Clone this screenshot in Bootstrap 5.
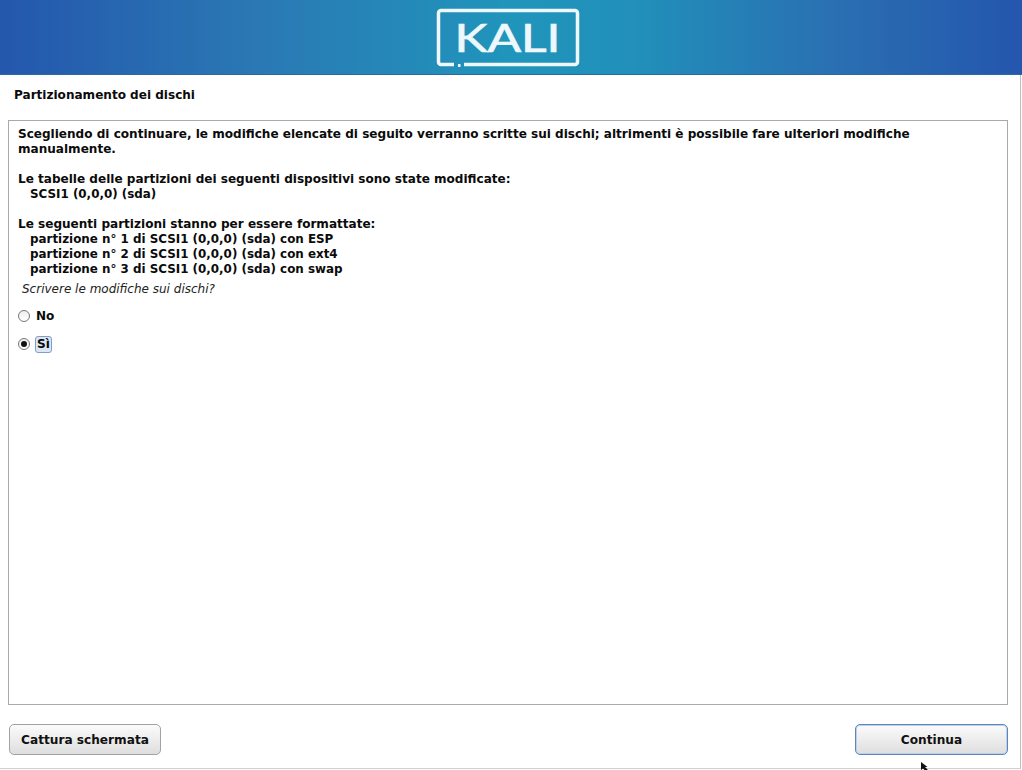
<!DOCTYPE html>
<html lang="en">
<head>
  <meta charset="UTF-8">
  <meta name="viewport" content="width=device-width, initial-scale=1">
  <title>Partizionamento dei dischi</title>
  <link href="https://cdn.jsdelivr.net/npm/bootstrap@5.3.0/dist/css/bootstrap.min.css" rel="stylesheet">
  <style>
    html, body { height: 770px; overflow: hidden; background: #fff; }
    body { font-family: "DejaVu Sans", sans-serif; font-size: 12.05px; font-weight: 700; color: #0b0b0b; line-height: 15px; }
    .kali-banner { height: 75px; background: linear-gradient(90deg, #2457ad 0%, #2a78b4 25%, #2095bb 50%, #2190ba 62%, #2a6fb2 82%, #2456ad 100%); border-bottom: 1px solid #2a6a9c; }
    .kali-logo { width: 146px; height: 74px; display: block; margin-right: 6px; }
    .kali-page { height: 695px; }
    .kali-main { width: 1021px; height: 694px; border-right: 1px solid #bdbdbd; border-bottom: 1px solid #d0d0d0; padding: 0 12px 12px 8px; }
    .kali-title { height: 45px; padding: 13px 0 0 6px; }
    .kali-box { height: 585px; border: 1px solid #a9a9a9; padding: 6px 9px; }
    .kali-box p { margin: 0 0 15px; }
    .kali-indent { padding-left: 12px; font-size: 11.9px; }
    .kali-question { font-weight: 400; font-style: italic; font-size: 12px; padding-left: 4px; margin-top: -10px; line-height: 15px; color: #222; margin-bottom: 5px; }
    .kali-radio { height: 28px; gap: 6px; }
    .kali-dot { width: 12px; height: 12px; border-radius: 50%; border: 1px solid #777; background: linear-gradient(#eee, #fff); display: flex; align-items: center; justify-content: center; flex: none; }
    .kali-dot.on::after { content: ""; width: 6px; height: 6px; border-radius: 50%; background: #111; }
    .kali-lbl { padding: 0 1px; margin-left: -1px; }
    .kali-lbl.on { background: #dce6f4; border: 1px solid #7f9fc9; border-radius: 3px; line-height: 15px; padding: 0 1px; margin-left: -1px; }
    .kali-btns { padding: 19px 0 0 1px; }
    .kali-btn { width: 152px; height: 31px; padding: 1px 0 0; font-size: 12.15px; font-weight: 700; color: #111; border: 1px solid #a2a2a2; border-radius: 5px; background: linear-gradient(#fbfbfb, #dedede); }
    .kali-btn.active-btn { width: 153px; border: 1px solid #5b86c0; box-shadow: inset 0 0 0 1px #bcd0ea; }
    .kali-cursor { position: absolute; left: 921px; top: 762px; width: 8px; height: 8px; display: block; }
  </style>
</head>
<body>
  <!-- Banner -->
  <div class="kali-banner d-flex justify-content-center">
    <svg class="kali-logo" viewBox="0 0 146 74">
      <path d="M19 64.500H6a2.500 2.500 0 0 1-2.500-2.500V13a2.500 2.500 0 0 1 2.500-2.500h134a2.500 2.500 0 0 1 2.500 2.500v49a2.500 2.500 0 0 1-2.500 2.500H29" fill="none" stroke="#eef7fb" stroke-width="3.500"/>
      <rect x="23" y="64" width="2.500" height="3" fill="#eef7fb"/>
      <text x="72.500" y="52" text-anchor="middle" fill="#eef7fb" stroke="#eef7fb" stroke-width="0.700" font-family="Lato, sans-serif" font-size="39" font-weight="400" textLength="106" lengthAdjust="spacingAndGlyphs">KALI</text>
    </svg>
  </div>

  <div class="kali-page">
    <div class="kali-main d-flex flex-column">
      <div class="kali-title">Partizionamento dei dischi</div>

      <div class="kali-box">
        <p>Scegliendo di continuare, le modifiche elencate di seguito verranno scritte sui dischi; altrimenti è possibile fare ulteriori modifiche manualmente.</p>
        <p>Le tabelle delle partizioni dei seguenti dispositivi sono state modificate:<br><span class="kali-indent">SCSI1 (0,0,0) (sda)</span></p>
        <p>Le seguenti partizioni stanno per essere formattate:<br>
          <span class="kali-indent">partizione n° 1 di SCSI1 (0,0,0) (sda) con ESP</span><br>
          <span class="kali-indent">partizione n° 2 di SCSI1 (0,0,0) (sda) con ext4</span><br>
          <span class="kali-indent">partizione n° 3 di SCSI1 (0,0,0) (sda) con swap</span></p>
        <div class="kali-question">Scrivere le modifiche sui dischi?</div>
        <div class="kali-radio d-flex align-items-center"><span class="kali-dot"></span><span class="kali-lbl">No</span></div>
        <div class="kali-radio d-flex align-items-center"><span class="kali-dot on"></span><span class="kali-lbl on">Sì</span></div>
      </div>

      <div class="kali-btns d-flex justify-content-between">
        <button type="button" class="btn kali-btn">Cattura schermata</button>
        <button type="button" class="btn kali-btn active-btn">Continua</button>
      </div>
    </div>
  </div>

  <!-- mouse pointer -->
  <svg class="kali-cursor" viewBox="0 0 8 8"><path d="M0 0L0 8L2 6.500L3.500 8L7 8L4 5L6.500 5Z" fill="#111"/></svg>

  <script src="https://cdn.jsdelivr.net/npm/bootstrap@5.3.0/dist/js/bootstrap.bundle.min.js"></script>
</body>
</html>
